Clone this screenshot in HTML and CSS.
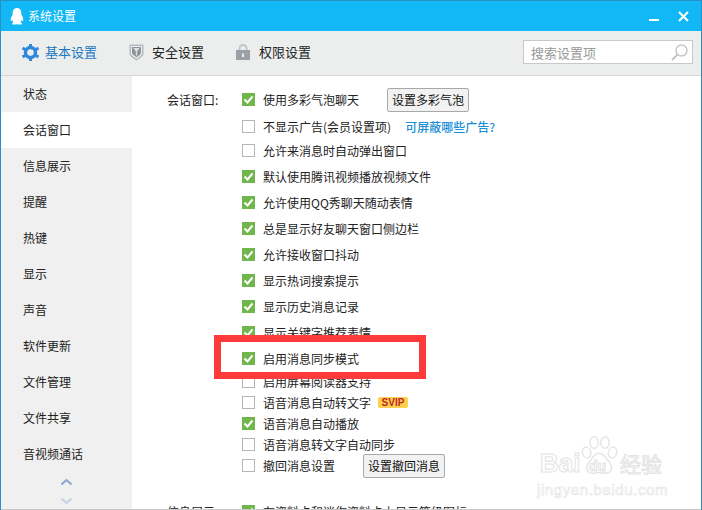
FILE: index.html
```html
<!DOCTYPE html>
<html lang="zh">
<head>
<meta charset="utf-8">
<title>系统设置</title>
<link rel="stylesheet" href="styles.css">
</head>
<body>
<div class="window">
  <header class="titlebar">
    <svg class="penguin" width="14" height="17" viewBox="0 0 14 17"><path fill="#fff" d="M7 0C4 0 2.700 2.300 2.700 5.200L2.500 7C1.300 8.800.5 10.700.7 12.300c.1 1 .8.900 1.500-.2.200.9.700 1.700 1.300 2.300-1 .4-1.700.9-1.400 1.500.4.800 2.800.7 4.900.3 2.100.4 4.500.5 4.900-.3.300-.6-.4-1.100-1.400-1.500.6-.6 1.100-1.400 1.300-2.300.7 1.100 1.400 1.200 1.500.2.200-1.600-.6-3.500-1.800-5.300l-.2-1.800C11.300 2.300 10 0 7 0z"/></svg>
    <span class="title">系统设置</span>
    <span class="spacer"></span>
    <span class="minimize"></span>
    <svg class="close" width="11" height="11" viewBox="0 0 11 11"><path d="M1 1l9 9M10 1l-9 9" stroke="#fff" stroke-width="2"/></svg>
  </header>
  <nav class="toolbar">
    <a class="tab active">
      <svg width="17" height="17" viewBox="0 0 17 17"><circle cx="8.500" cy="8.500" r="5" fill="none" stroke="#2f87d9" stroke-width="3.400"/><path stroke="#2f87d9" stroke-width="3" d="M8.500 0v3M8.500 14v3M.6 4l2.600 1.500M13.800 11.500l2.600 1.500M.6 13l2.600-1.500M13.800 5.500L16.400 4"/></svg>
      基本设置</a>
    <a class="tab tab-security">
      <svg width="15" height="17" viewBox="0 0 15 17"><path fill="#b4babd" d="M.5.500h14v9.300c0 2.500-4.500 5.300-7 6.700-2.500-1.400-7-4.200-7-6.700z"/><path fill="#eceeee" d="M2 2h11v7.500c0 1.800-3.500 4-5.500 5.200C5.500 13.500 2 11.300 2 9.500z"/><path fill="#8d9599" d="M3 3h9v6c0 1.400-2.800 3.200-4.500 4.200C5.800 12.200 3 10.400 3 9z"/><path fill="#dfe2e3" d="M4.500 4h6L8.200 7.200v4.300H6.800V7.200z"/></svg>
      安全设置</a>
    <a class="tab tab-privacy">
      <svg width="14" height="16" viewBox="0 0 14 16"><path fill="none" stroke="#c2c6c8" stroke-width="2" d="M3.500 7V4.500a3.500 3.500 0 0 1 7 0V7"/><path fill="#9aa1a6" fill-rule="evenodd" d="M0 6h14v10H0zM6 9.500v3.500h2V9.500z"/></svg>
      权限设置</a>
    <span class="spacer"></span>
    <div class="search">
      <span class="search-text">搜索设置项</span>
      <svg width="17" height="17" viewBox="0 0 17 17"><circle cx="10.500" cy="6.500" r="5.500" fill="none" stroke="#c4c4c4" stroke-width="1.400"/><path d="M6.500 10.500L1 16" stroke="#c4c4c4" stroke-width="1.800"/></svg>
    </div>
  </nav>
  <div class="body">
    <aside class="sidebar">
      <ul class="menu">
        <li>状态</li>
        <li class="current">会话窗口</li>
        <li>信息展示</li>
        <li>提醒</li>
        <li>热键</li>
        <li>显示</li>
        <li>声音</li>
        <li>软件更新</li>
        <li>文件管理</li>
        <li>文件共享</li>
        <li>音视频通话</li>
      </ul>
      <div class="arrows">
        <svg width="11" height="6" viewBox="0 0 11 6"><path d="M.5 5.500l5-4.500 5 4.500" fill="none" stroke="#8ba9d3" stroke-width="2"/></svg>
        <svg width="11" height="6" viewBox="0 0 11 6"><path d="M.5.500l5 4.500 5-4.500" fill="none" stroke="#c3d2e6" stroke-width="2"/></svg>
      </div>
    </aside>
    <main class="content">
      <section class="group">
        <div class="label">会话窗口:</div>
        <div class="rows">
          <div class="row on"><i class="box"></i>使用多彩气泡聊天<button class="btn btn-bubble">设置多彩气泡</button></div>
          <div class="row second"><i class="box"></i>不显示广告(会员设置项)<a class="link">可屏蔽哪些广告?</a></div>
          <div class="row third"><i class="box"></i>允许来消息时自动弹出窗口</div>
          <div class="row on"><i class="box"></i>默认使用腾讯视频播放视频文件</div>
          <div class="row on"><i class="box"></i>允许使用QQ秀聊天随动表情</div>
          <div class="row on"><i class="box"></i>总是显示好友聊天窗口侧边栏</div>
          <div class="row on"><i class="box"></i>允许接收窗口抖动</div>
          <div class="row on"><i class="box"></i>显示热词搜索提示</div>
          <div class="row on"><i class="box"></i>显示历史消息记录</div>
          <div class="row on"><i class="box"></i>显示关键字推荐表情</div>
          <div class="row on marked"><i class="box"></i>启用消息同步模式</div>
          <div class="row tight-first"><i class="box"></i>启用屏幕阅读器支持</div>
          <div class="row tight"><i class="box"></i>语音消息自动转文字<span class="svip">SVIP</span></div>
          <div class="row tight on"><i class="box"></i>语音消息自动播放</div>
          <div class="row tight"><i class="box"></i>语音消息转文字自动同步</div>
          <div class="row tight"><i class="box"></i>撤回消息设置<button class="btn btn-recall">设置撤回消息</button></div>
        </div>
      </section>
      <section class="group group-next">
        <div class="label">信息展示:</div>
        <div class="rows">
          <div class="row on"><i class="box"></i>在资料卡和迷你资料卡上显示等级图标</div>
        </div>
      </section>
      <div class="highlight"></div>
      <div class="watermark">
        <svg class="paw" width="40" height="40" viewBox="0 0 46 48"><g fill="#fff" stroke="#e6e6e6" stroke-width="1.800"><ellipse cx="7" cy="21" rx="5" ry="6.500" transform="rotate(-15 7 21)"/><ellipse cx="16" cy="9" rx="5" ry="7"/><ellipse cx="29" cy="9" rx="5" ry="7"/><ellipse cx="38" cy="21" rx="5" ry="6.500" transform="rotate(15 38 21)"/><path d="M22 22c5 0 7 4 10 8 3 3 5 5 5 9 0 5-4 7-8 7-3 0-5-1-7-1s-4 1-7 1c-4 0-8-2-8-7 0-4 2-6 5-9 3-4 5-8 10-8z"/></g></svg>
        <span class="wm-bai">Bai</span>
        <span class="wm-du">du</span>
        <span class="wm-jy">经验</span>
        <span class="wm-sub">jingyan.baidu.com</span>
      </div>
    </main>
  </div>
</div>
</body>
</html>
```
FILE: styles.css
```css
* { box-sizing: border-box; }
html, body { margin: 0; padding: 0; }
body {
  width: 702px;
  height: 510px;
  overflow: hidden;
  background: #2a90c4;
  font-family: "Noto Sans CJK SC", "Liberation Sans", sans-serif;
  font-size: 12px;
  color: #222;
}
.window {
  height: 509px;
  margin: 1px 1px 0 1px;
  display: flex;
  flex-direction: column;
  background: #fff;
  border-bottom: 1px solid #c8c8c8;
}
.spacer { flex: 1; }
.titlebar {
  height: 30px;
  flex: none;
  background: #12b7f5;
  display: flex;
  align-items: center;
  padding: 0 12px 0 9px;
  color: #fff;
}
.title { margin-left: 4px; font-size: 12px; margin-bottom: 2px; }
.penguin { margin-bottom: 0; }
.minimize {
  width: 10px;
  height: 2px;
  background: #fff;
  margin: 7px 19px 0 0;
}
.close { display: block; }
.toolbar {
  height: 45px;
  flex: none;
  background: #eceeee;
  border-bottom: 1px solid #d6d6d6;
  display: flex;
  align-items: center;
  padding: 0 8px 0 21px;
  font-size: 13px;
  color: #222;
}
.tab { display: flex; align-items: center; line-height: 18px; margin-bottom: 2px; }
.tab svg { margin-right: 6px; }
.tab.active { color: #1a76c2; }
.tab-security { margin-left: 32px; }
.tab-security svg { margin-right: 8px; }
.tab-privacy { margin-left: 32px; }
.tab-privacy svg { margin-right: 9px; }
.search {
  width: 170px;
  height: 24px;
  background: #fff;
  border: 1px solid #c8c8c8;
  display: flex;
  align-items: center;
  justify-content: space-between;
  padding: 0 4px 0 7px;
  color: #999;
  margin-bottom: 2px;
}
.body { flex: 1; display: flex; min-height: 0; }
.sidebar {
  width: 131px;
  flex: none;
  background: #f0f0f0;
  display: flex;
  flex-direction: column;
}
.menu { list-style: none; margin: 0; padding: 0; }
.menu li {
  height: 36px;
  line-height: 36px;
  padding-left: 22px;
}
.menu li.current { background: #fff; }
.arrows {
  display: flex;
  flex-direction: column;
  align-items: center;
  gap: 13px;
  margin-top: 7px;
}
.arrows svg { display: block; }
.content {
  position: relative;
  flex: 1;
  overflow: hidden;
  background: #fff;
  padding: 13px 0 0 35px;
}
.group { display: flex; }
.group-next { margin-top: 25px; }
.label { width: 75px; height: 21px; line-height: 21px; }
.rows { flex: 1; }
.row {
  display: flex;
  align-items: center;
  height: 21px;
  line-height: 21px;
}
.row + .row { margin-top: 5px; }
.row + .row.second { margin-top: 6px; }
.row + .row.third { margin-top: 3px; }
.row + .row.tight-first { margin-top: 2px; }
.row + .row.tight { margin-top: 0; }
.row.marked { position: relative; z-index: 2; }
.box {
  width: 13px;
  height: 13px;
  margin-right: 8px;
  flex: none;
  border: 1px solid #b5b5b5;
  background: #fff;
}
.row.on .box {
  border: 0;
  background: #6fb74c url("data:image/svg+xml,%3Csvg xmlns='http://www.w3.org/2000/svg' viewBox='0 0 13 13'%3E%3Cpath d='M2.500 6.500l3 3 5-6' fill='none' stroke='%23fff' stroke-width='2'/%3E%3C/svg%3E");
}
.btn {
  font: inherit;
  color: #111;
  background: #f2f2f2;
  border: 1px solid #a8a8a8;
  border-radius: 2px;
  height: 24px;
  padding: 0 3px;
  line-height: 20px;
  flex: none;
}
.btn-bubble { width: 82px; margin-left: 28px; }
.btn-recall { width: 82px; margin-left: 28px; }
.link { margin-left: 14px; color: #1a8fd8; font-weight: 500; }
.svip {
  margin-left: 7px;
  width: 30px;
  height: 11px;
  line-height: 11px;
  text-align: center;
  background: #fcd14e;
  border-radius: 2px;
  color: #c0272d;
  font-size: 10px;
  font-weight: 700;
  font-family: "Liberation Sans", sans-serif;
}
.highlight {
  position: absolute;
  z-index: 1;
  left: 82px;
  top: 259px;
  width: 212px;
  height: 44px;
  background: #fff;
  border: 7px solid #fe3a3a;
}
.watermark {
  position: absolute;
  left: 405px;
  top: 358px;
  width: 130px;
  height: 75px;
  font-family: "Liberation Sans", "Noto Sans CJK SC", sans-serif;
  color: #fff;
  -webkit-text-stroke: 1px #e4e4e4;
  white-space: nowrap;
}
.watermark span { position: absolute; }
.paw { position: absolute; left: 43px; top: 1px; }
.wm-bai { left: 3px; top: 14px; font-size: 26px; line-height: 30px; font-weight: 700; }
.wm-du { left: 52px; top: 23px; font-size: 14px; line-height: 18px; font-weight: 700; }
.wm-jy { left: 83px; top: 15px; font-size: 21px; line-height: 28px; font-family: "Noto Sans CJK SC", sans-serif; }
.wm-sub { left: 0; top: 47px; font-size: 15px; line-height: 18px; letter-spacing: .6px; -webkit-text-stroke-width: .6px; }
```
